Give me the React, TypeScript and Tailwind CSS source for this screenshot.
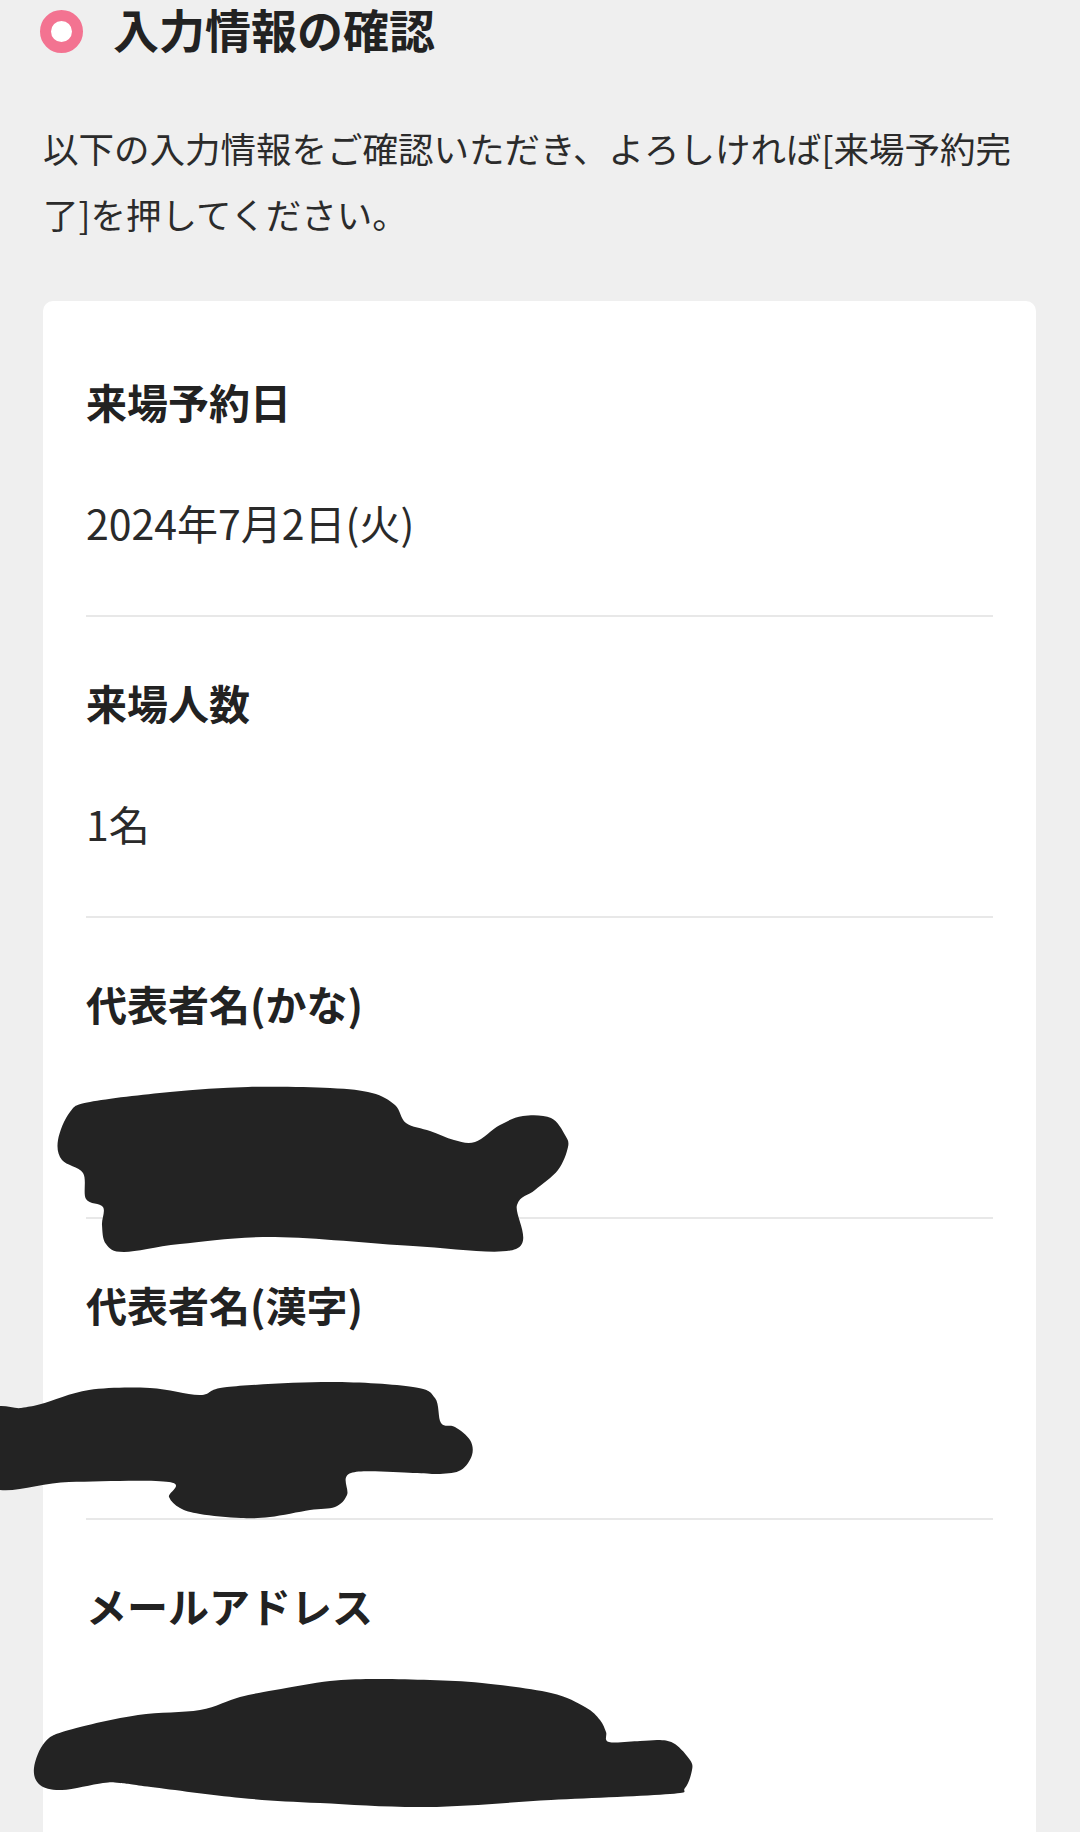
import React, { FC } from 'react'

type Row = {
    label: string
    value?: string
}

const rows: Row[] = [
    { label: '来場予約日', value: '2024年7月2日(火)' },
    { label: '来場人数', value: '1名' },
    { label: '代表者名(かな)' },
    { label: '代表者名(漢字)' },
    { label: 'メールアドレス' },
]

// redaction marks drawn over the personal fields in the screenshot
const marks: number[][] = [
    [58, 1140, 70, 1112, 90, 1102, 170, 1092, 248, 1087, 330, 1088, 372, 1093, 395, 1105, 406, 1123, 430, 1131, 454, 1140, 475, 1142, 500, 1125, 523, 1116, 551, 1118, 565, 1135, 568, 1147, 558, 1170, 535, 1190, 517, 1205, 516, 1249, 413, 1246, 275, 1237, 180, 1244, 124, 1252, 106, 1244, 102, 1225, 103, 1207, 86, 1199, 83, 1173, 62, 1160],
    [-10, 1413, 21, 1408, 41, 1404, 89, 1390, 150, 1388, 200, 1395, 227, 1387, 330, 1382, 413, 1387, 435, 1398, 441, 1423, 455, 1427, 470, 1440, 472, 1455, 461, 1470, 440, 1474, 413, 1473, 351, 1473, 347, 1495, 335, 1507, 310, 1510, 270, 1517, 241, 1518, 200, 1514, 180, 1508, 169, 1497, 169, 1482, 69, 1482, -10, 1486],
    [34, 1768, 45, 1742, 69, 1730, 138, 1715, 200, 1710, 240, 1697, 275, 1690, 330, 1681, 372, 1679, 430, 1680, 482, 1683, 551, 1693, 585, 1707, 600, 1720, 606, 1732, 609, 1742, 640, 1741, 660, 1740, 675, 1744, 690, 1760, 692, 1770, 685, 1788, 670, 1794, 551, 1800, 427, 1807, 320, 1803, 241, 1798, 151, 1787, 120, 1783, 103, 1783, 62, 1790, 40, 1785],
]

// closed catmull-rom -> cubic bezier so the marks look hand drawn
const smooth = (p: number[]) => {
    const pts: [number, number][] = []
    for (let i = 0; i < p.length; i += 2) pts.push([p[i], p[i + 1]])
    const n = pts.length
    let d = `M${pts[0][0]} ${pts[0][1]}`
    for (let i = 0; i < n; i++) {
        const p0 = pts[(i - 1 + n) % n]
        const p1 = pts[i]
        const p2 = pts[(i + 1) % n]
        const p3 = pts[(i + 2) % n]
        const c1x = p1[0] + (p2[0] - p0[0]) / 6
        const c1y = p1[1] + (p2[1] - p0[1]) / 6
        const c2x = p2[0] - (p3[0] - p1[0]) / 6
        const c2y = p2[1] - (p3[1] - p1[1]) / 6
        d += ` C${c1x.toFixed(1)} ${c1y.toFixed(1)} ${c2x.toFixed(1)} ${c2y.toFixed(1)} ${p2[0]} ${p2[1]}`
    }
    return d + ' Z'
}

const InfoRow: FC<{ row: Row; last: boolean }> = ({ row, last }) => {
    return (
        <div className={`flex flex-col gap-[61px] pt-[55px] pb-[63px] ${last ? '' : 'border-b-2 border-[#e8e8e8]'}`}>
            <p className="text-[41px] leading-[60px] font-bold text-[#222]">{row.label}</p>
            <p className="text-[41px] leading-[60px] text-[#2a2a2a]">{row.value ?? '\u00a0'}</p>
        </div>
    )
}

const App: FC = () => {
    return (
        <div className="w-[1080px] h-[1841px] bg-white font-['Noto_Sans_CJK_JP','Noto_Sans',sans-serif]">
            <div className="relative h-[1832px] overflow-hidden bg-[#efefef]">
                <div className="flex items-start pl-[40px] pt-[2px]">
                    <span className="mt-[8px] h-[43px] w-[43px] rounded-full border-[11px] border-[#f37391] bg-white" />
                    <h1 className="ml-[30px] text-[46px] leading-[52px] font-bold text-[#222]">入力情報の確認</h1>
                </div>

                <p className="mt-[61px] pl-[43px] pr-[44px] text-[35.5px] leading-[66px] text-[#2b2b2b]">
                    以下の入力情報をご確認いただき、よろしければ[来場予約完了]を押してください。
                </p>

                <div className="mt-[54px] ml-[43px] mr-[44px] rounded-[10px] bg-white px-[43px] pt-[15px] pb-[40px]">
                    {rows.map((row, i) => (
                        <InfoRow key={row.label} row={row} last={i === rows.length - 1} />
                    ))}
                </div>

                <svg
                    className="pointer-events-none absolute inset-0"
                    width="1080"
                    height="1832"
                    viewBox="0 0 1080 1832"
                >
                    {marks.map((m, i) => (
                        <path key={i} d={smooth(m)} fill="#232323" />
                    ))}
                </svg>
            </div>
        </div>
    )
}

export default App
